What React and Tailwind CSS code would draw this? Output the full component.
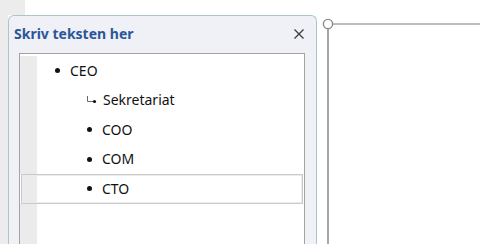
import React from 'react';

const items = [
  { id: 1, label: 'CEO', level: 1 },
  { id: 2, label: 'Sekretariat', level: 2, assistant: true },
  { id: 3, label: 'COO', level: 2 },
  { id: 4, label: 'COM', level: 2 },
  { id: 5, label: 'CTO', level: 2, selected: true },
];

const Marker = ({ item }) => {
  if (item.assistant) {
    return (
      <svg width="11" height="8" viewBox="0 0 11 8" className="shrink-0">
        <path d="M1.5 0 V5.5 H7" stroke="#6b6b6b" strokeWidth="1" fill="none" />
        <circle cx="8.5" cy="5.5" r="1.6" fill="#111" />
      </svg>
    );
  }
  return <span className="w-[5px] h-[5px] rounded-full bg-[#111] shrink-0" />;
};

const Row = ({ item }) => (
  <div
    className={`flex h-[29.5px] shrink-0 ${
      item.selected ? 'mx-[1px] border border-[#c9c9c9] shadow-[inset_0_0_0_1px_#ececec]' : ''
    }`}
  >
    <div className={`${item.selected ? 'w-[15px]' : 'w-[17px]'} bg-[#ebebeb] shrink-0`} />
    <div
      className={`flex items-center ${
        item.level === 1 ? 'pl-[18px] gap-[10px]' : item.assistant ? 'pl-[49px] gap-[6px]' : 'pl-[50px] gap-[10px]'
      }`}
    >
      <Marker item={item} />
      <span className="text-[14px] text-[#111] leading-none">{item.label}</span>
    </div>
  </div>
);

export default function App() {
  return (
    <div
      className="w-[480px] h-[244px] flex bg-white overflow-hidden"
      style={{ fontFamily: '"Noto Sans", "Open Sans", sans-serif' }}
    >
      {/* text pane column */}
      <div className="w-[317px] flex flex-col shrink-0">
        <div className="h-[15px] flex shrink-0">
          <div className="w-[25px] bg-[#ececec]" />
          <div className="flex-1 bg-white" />
        </div>
        <div className="flex-1 flex min-h-0">
          <div className="w-[8px] bg-[#ececec] shrink-0" />
          <div className="flex-1 flex flex-col bg-[#f0f0f7] border border-b-0 border-[#a9c7c9] rounded-t-[6px] min-h-0">
            <div className="h-[37px] flex items-center justify-between pl-[5px] pr-[12px] pb-[2px] shrink-0">
              <span className="text-[14px] font-bold text-[#2b5797]">Skriv teksten her</span>
              <svg width="10" height="10" viewBox="0 0 10 10">
                <path d="M0.5 0.5 L9.5 9.5 M9.5 0.5 L0.5 9.5" stroke="#3c3c3c" strokeWidth="1.3" />
              </svg>
            </div>
            <div className="flex-1 ml-[10px] mr-[11px] border border-b-0 border-[#a3a3a3] bg-white flex flex-col pt-[2px] min-h-0">
              {items.map((item) => (
                <Row key={item.id} item={item} />
              ))}
              <div className="flex-1 flex">
                <div className="w-[17px] bg-[#ebebeb]" />
              </div>
            </div>
          </div>
        </div>
      </div>

      {/* slide canvas edge with selection handle */}
      <div className="flex-1 bg-white">
        <svg width="163" height="244" viewBox="0 0 163 244">
          <line x1="11" y1="29" x2="11" y2="244" stroke="#a6a6a6" strokeWidth="2" />
          <line x1="16" y1="24" x2="163" y2="24" stroke="#a6a6a6" strokeWidth="1.5" />
          <circle cx="11" cy="24" r="4.6" fill="#fff" stroke="#8a8a8a" strokeWidth="1.4" />
        </svg>
      </div>
    </div>
  );
}
